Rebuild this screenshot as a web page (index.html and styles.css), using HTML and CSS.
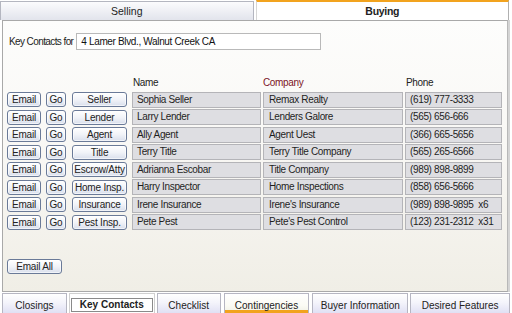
FILE: index.html
```html
<!DOCTYPE html>
<html>
<head>
<meta charset="utf-8">
<link rel="stylesheet" href="styles.css">
</head>
<body>
<div class="app">
  <div class="toptabs">
    <div class="ttab">Selling</div>
    <div class="ttab active">Buying</div>
  </div>
  <div class="panel">
    <div class="addr">
      <span class="addr-label">Key Contacts for</span>
      <div class="addr-input">4 Lamer Blvd., Walnut Creek CA</div>
    </div>
    <div class="grid">
      <div class="hdr name-col">Name</div>
      <div class="hdr company-col">Company</div>
      <div class="hdr phone-col">Phone</div>

      <button class="btn b-email">Email</button><button class="btn b-go">Go</button><button class="btn b-role">Seller</button>
      <div class="cell c-name">Sophia Seller</div><div class="cell c-comp">Remax Realty</div><div class="cell c-phone">(619) 777-3333</div>

      <button class="btn b-email">Email</button><button class="btn b-go">Go</button><button class="btn b-role">Lender</button>
      <div class="cell c-name">Larry Lender</div><div class="cell c-comp">Lenders Galore</div><div class="cell c-phone">(565) 656-666</div>

      <button class="btn b-email">Email</button><button class="btn b-go">Go</button><button class="btn b-role">Agent</button>
      <div class="cell c-name">Ally Agent</div><div class="cell c-comp">Agent Uest</div><div class="cell c-phone">(366) 665-5656</div>

      <button class="btn b-email">Email</button><button class="btn b-go">Go</button><button class="btn b-role">Title</button>
      <div class="cell c-name">Terry Title</div><div class="cell c-comp">Terry Title Company</div><div class="cell c-phone">(565) 265-6566</div>

      <button class="btn b-email">Email</button><button class="btn b-go">Go</button><button class="btn b-role">Escrow/Atty</button>
      <div class="cell c-name">Adrianna Escobar</div><div class="cell c-comp">Title Company</div><div class="cell c-phone">(989) 898-9899</div>

      <button class="btn b-email">Email</button><button class="btn b-go">Go</button><button class="btn b-role">Home Insp.</button>
      <div class="cell c-name">Harry Inspector</div><div class="cell c-comp">Home Inspections</div><div class="cell c-phone">(858) 656-5666</div>

      <button class="btn b-email">Email</button><button class="btn b-go">Go</button><button class="btn b-role">Insurance</button>
      <div class="cell c-name">Irene Insurance</div><div class="cell c-comp">Irene's Insurance</div><div class="cell c-phone">(989) 898-9895&nbsp; x6</div>

      <button class="btn b-email">Email</button><button class="btn b-go">Go</button><button class="btn b-role">Pest Insp.</button>
      <div class="cell c-name">Pete Pest</div><div class="cell c-comp">Pete's Pest Control</div><div class="cell c-phone">(123) 231-2312&nbsp; x31</div>
    </div>
    <button class="btn email-all">Email All</button>
  </div>
  <div class="bottabs">
    <div class="btab w-closings">Closings</div>
    <div class="btab w-key active"><span class="focus">Key Contacts</span></div>
    <div class="btab w-check">Checklist</div>
    <div class="btab w-cont hover">Contingencies</div>
    <div class="btab w-buyer">Buyer Information</div>
    <div class="btab w-desired">Desired Features</div>
  </div>
</div>
</body>
</html>
```

FILE: styles.css
```css
* { box-sizing: border-box; }
html, body {
  margin: 0;
  padding: 0;
  background: #ffffff;
  overflow: hidden;
}
body {
  font-family: "Liberation Sans", Arial, sans-serif;
  font-size: 10px;
  letter-spacing: -0.35px;
  color: #1e1e1e;
}
.app {
  width: 512px;
  height: 313px;
  display: flex;
  flex-direction: column;
  background: #ffffff;
}
.toptabs {
  display: flex;
  height: 20px;
  padding-right: 3px;
}
.ttab {
  flex: 1;
  display: flex;
  align-items: center;
  justify-content: center;
  margin-top: 1px;
  border: 1px solid #b4b6c0;
  border-bottom: none;
  background: linear-gradient(#fbfbfd, #e2e4ec);
  color: #222;
  font-size: 10.5px;
  letter-spacing: 0;
}
.ttab.active {
  margin-top: 0;
  margin-left: 2px;
  border-top: 2px solid #f2a31e;
  border-left: 1px solid #d6d6d6;
  border-right: 1px solid #b0b0b0;
  background: #ffffff;
  font-weight: bold;
  letter-spacing: -0.3px;
}
.panel {
  flex: 1;
  margin: 0 4px 0 2px;
  border: 1px solid #a9a9a9;
  border-right-color: #b8b8b8;
  box-shadow: 2px 0 0 #d4d4d4;
  background: linear-gradient(#fdfdfc 0%, #f9f8f5 45%, #f0eee6 100%);
  padding: 12px 0 0 4px;
  display: flex;
  flex-direction: column;
  align-items: flex-start;
}
.addr {
  display: flex;
  align-items: center;
  gap: 3px;
  margin-left: 2px;
}
.addr-label { color: #222; letter-spacing: -0.6px; }
.addr-input {
  width: 245px;
  height: 17px;
  border: 1px solid #b9b9b9;
  background: #ffffff;
  padding: 0 4px;
  line-height: 15px;
  color: #111;
}
.grid {
  margin-top: 26px;
  display: grid;
  grid-template-columns: 34px 25px 61px 134px 142px 99px;
  grid-template-rows: 14px;
  grid-auto-rows: 16px;
  row-gap: 1.5px;
  align-items: center;
}
.hdr {
  line-height: 14px;
  color: #222;
}
.name-col { grid-column: 4; padding-left: 6px; }
.company-col { grid-column: 5; padding-left: 2px; color: #7c1426; }
.phone-col { grid-column: 6; padding-left: 3px; }
.btn {
  font-family: "Liberation Sans", Arial, sans-serif;
  font-size: 10px;
  letter-spacing: -0.2px;
  color: #222;
  height: 15px;
  padding: 0;
  border: 1px solid #6a7a98;
  border-radius: 3px;
  background: linear-gradient(#ffffff 0%, #f1f3f8 50%, #d9dfec 100%);
  box-shadow: inset 0 0 0 1px rgba(255,255,255,0.6);
  line-height: 13px;
  text-align: center;
  justify-self: end;
  white-space: nowrap;
}
.b-email { width: 34px; }
.b-go { width: 20px; }
.b-role { width: 55px; }
.cell {
  height: 16px;
  background: #dedee2;
  border: 1px solid #b4b4b8;
  padding-left: 4px;
  line-height: 14px;
  white-space: nowrap;
  overflow: hidden;
}
.c-name { margin-left: 5px; }
.c-comp { margin-left: 2px; padding-left: 5px; }
.c-phone { margin-left: 2px; }
.email-all {
  margin-top: 29px;
  width: 55px;
  height: 15px;
  margin-left: 0;
}
.bottabs {
  display: flex;
  height: 21px;
  padding: 1px 2px 0 2px;
  gap: 2px;
}
.btab {
  display: flex;
  align-items: center;
  justify-content: center;
  border: 1px solid #b6b6c2;
  border-bottom: none;
  background: linear-gradient(#ffffff 0%, #f4f4fb 45%, #e0e0f4 100%);
  color: #222;
  padding-top: 4px;
  letter-spacing: 0;
}
.w-closings { width: 65px; }
.w-key { width: 86px; }
.w-check { width: 64px; }
.w-cont { width: 86px; margin-left: 1px; }
.w-buyer { width: 96px; margin-left: 1px; }
.w-desired { width: 100px; }
.btab.active {
  background: #ffffff;
  border-color: #d0d0d0;
  font-weight: bold;
  padding-top: 3px;
}
.focus {
  display: block;
  width: 82px;
  border: 1px solid #8a8a8a;
  text-align: center;
  line-height: 12px;
}
.btab.hover {
  box-shadow: inset 0 -3px 0 #f2a31e;
  background: linear-gradient(#ffffff 0%, #fbfbf4 60%, #f0f0e4 100%);
}
```
